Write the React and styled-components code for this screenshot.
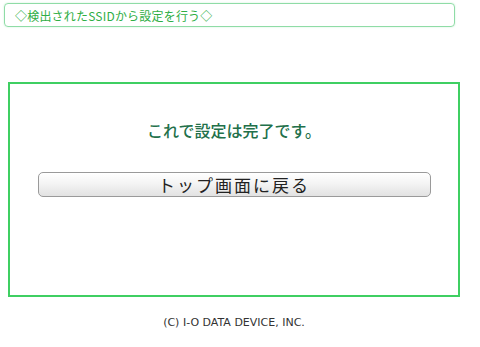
import React from "react";
import styled, { createGlobalStyle } from "styled-components";

const Global = createGlobalStyle`
  html, body { margin: 0; padding: 0; background: #fff; }
  body { font-family: "Noto Sans CJK JP", "Noto Sans", sans-serif; }
`;

const Page = styled.div`
  width: 480px;
  height: 347px;
  display: flex;
  flex-direction: column;
  padding-top: 3px;
  box-sizing: border-box;
`;

const HeaderBar = styled.div`
  margin-left: 4px;
  width: 451px;
  height: 24px;
  box-sizing: border-box;
  border: 1px solid #8fdca6;
  border-radius: 4px;
  box-shadow: 0 0 2px #c8efd3;
  display: flex;
  align-items: center;
  padding-left: 10px;
  font-size: 12px;
  color: #2fae45;
  letter-spacing: 0.2px;
`;

const Panel = styled.div`
  margin-top: 55px;
  margin-left: 8px;
  width: 452px;
  height: 215px;
  box-sizing: border-box;
  border: 2px solid #3fcf62;
  display: flex;
  flex-direction: column;
  align-items: center;
  padding-top: 35px;
`;

const Message = styled.div`
  font-size: 16px;
  color: #22704a;
  font-weight: 500;
  line-height: 22px;
`;

const Button = styled.button`
  margin-top: 31px;
  width: 393px;
  height: 25px;
  border: 1px solid #9a9a9a;
  border-radius: 5px;
  background: linear-gradient(#ffffff, #f4f4f4 45%, #e2e2e2);
  box-shadow: inset 0 1px 0 #fff;
  font-family: "Noto Sans CJK JP", sans-serif;
  font-size: 17px;
  letter-spacing: 2px;
  color: #222;
  padding: 0;
  line-height: 22px;
  cursor: pointer;
`;

const Footer = styled.div`
  margin-top: 19px;
  margin-left: 8px;
  width: 452px;
  text-align: center;
  font-size: 11px;
  color: #333;
  font-family: "DejaVu Sans", sans-serif;
  letter-spacing: 0;
`;

export default function App() {
  return (
    <>
      <Global />
      <Page>
        <HeaderBar>◇検出されたSSIDから設定を行う◇</HeaderBar>
        <Panel>
          <Message>これで設定は完了です。</Message>
          <Button>トップ画面に戻る</Button>
        </Panel>
        <Footer>(C) I-O DATA DEVICE, INC.</Footer>
      </Page>
    </>
  );
}
